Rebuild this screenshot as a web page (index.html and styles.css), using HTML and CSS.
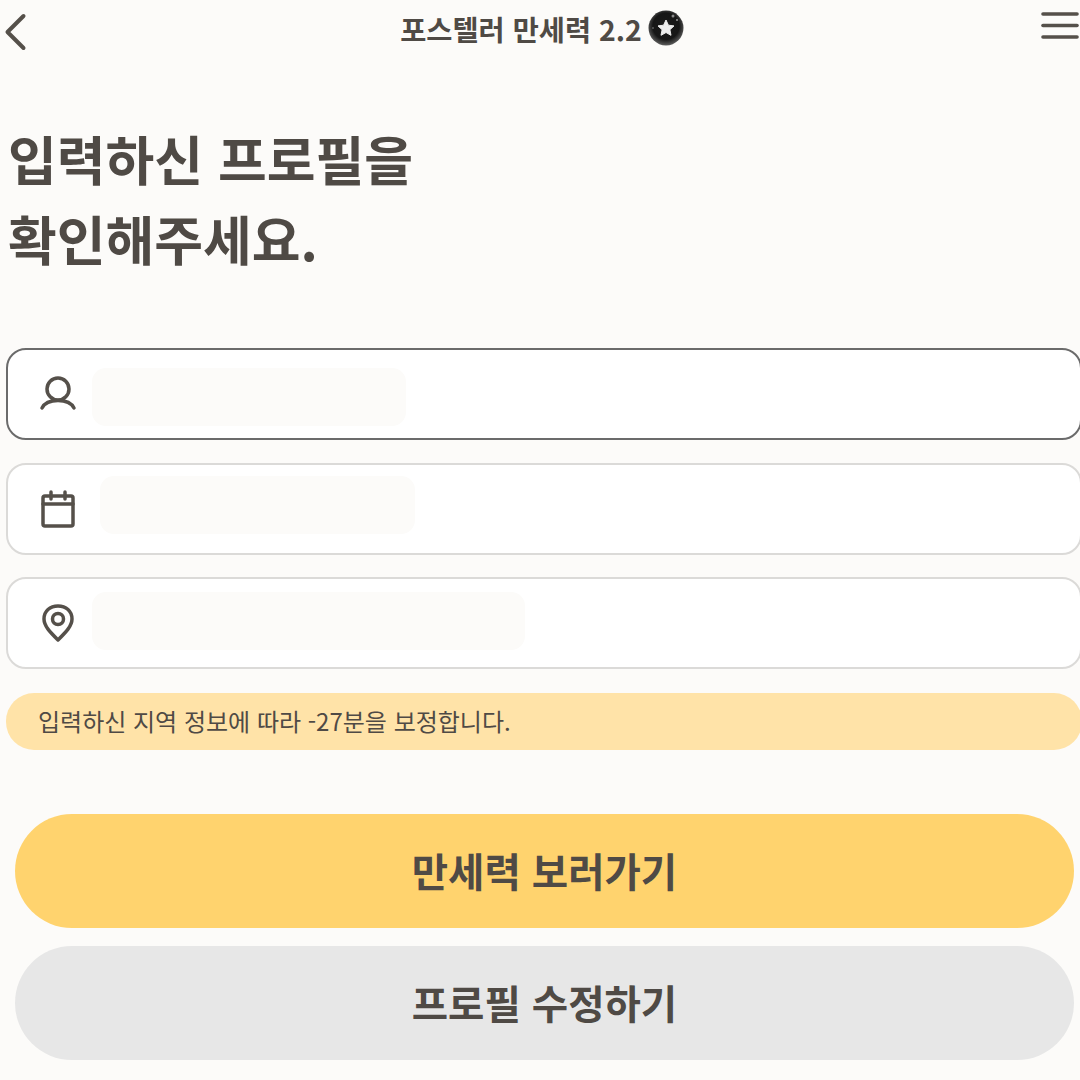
FILE: index.html
```html
<!DOCTYPE html>
<html lang="ko">
<head>
    <meta charset="UTF-8">
    <meta name="viewport" content="width=device-width, initial-scale=1.0">
    <title>프로필 확인</title>
    <link rel="stylesheet" href="styles.css">
</head>
<body>
    <header class="top-bar">
        <svg class="back-icon" width="24" height="38" viewBox="0 0 24 38" fill="none">
            <path d="M20.500 3 L4.500 19 L20.500 35" stroke="#55504a" stroke-width="4" stroke-linecap="round" stroke-linejoin="round"/>
        </svg>
        <div class="top-title">
            <span>포스텔러 만세력 2.2</span>
            <svg width="36" height="36" viewBox="0 0 36 36">
                <defs>
                    <radialGradient id="ball" cx="50%" cy="45%" r="58%">
                        <stop offset="0%" stop-color="#1a1a1a"/>
                        <stop offset="65%" stop-color="#161616"/>
                        <stop offset="100%" stop-color="#6a6a6a"/>
                    </radialGradient>
                </defs>
                <circle cx="18" cy="18" r="17.500" fill="url(#ball)"/>
                <path d="M18 10 L20.400 15.200 L26 15.900 L21.900 19.700 L23 25.300 L18 22.500 L13 25.300 L14.100 19.700 L10 15.900 L15.600 15.200 Z" fill="#ececec" stroke="#ececec" stroke-linejoin="round"/>
                <circle cx="25" cy="6" r="1.500" fill="#8a8a8a"/>
                <circle cx="29" cy="10" r="1" fill="#999"/>
                <circle cx="5" cy="18" r="0.800" fill="#888"/>
            </svg>
        </div>
        <svg class="menu-icon" width="38" height="30" viewBox="0 0 38 30" fill="none" stroke="#55504a" stroke-width="3.600" stroke-linecap="round">
            <path d="M2 3 H36"/>
            <path d="M2 14.500 H36"/>
            <path d="M2 26 H36"/>
        </svg>
    </header>

    <h1 class="headline">입력하신 프로필을<br>확인해주세요.</h1>

    <div class="fields">
        <div class="field field-active">
            <svg class="field-icon" width="38" height="38" viewBox="0 0 38 38" fill="none" stroke="#55504a" stroke-width="3.500" stroke-linecap="round" stroke-linejoin="round">
                <circle cx="19" cy="14" r="11"/>
                <path d="M3 33 C8 23 30 23 35 33"/>
            </svg>
            <div class="masked masked-name"></div>
        </div>
        <div class="field">
            <svg class="field-icon" width="38" height="38" viewBox="0 0 38 38" fill="none" stroke="#55504a" stroke-width="3.500" stroke-linecap="round" stroke-linejoin="round">
                <rect x="4" y="6" width="30" height="30" rx="2"/>
                <path d="M4 14 H34"/>
                <path d="M12 2 V9"/>
                <path d="M26 2 V9"/>
            </svg>
            <div class="masked masked-date"></div>
        </div>
        <div class="field">
            <svg class="field-icon" width="38" height="38" viewBox="0 0 38 38" fill="none" stroke="#55504a" stroke-width="3.500" stroke-linecap="round" stroke-linejoin="round">
                <path d="M19 36 C11 28 5 22 5 15 C5 7 11 2 19 2 C27 2 33 7 33 15 C33 22 27 28 19 36 Z"/>
                <circle cx="19" cy="15" r="5.500"/>
            </svg>
            <div class="masked masked-place"></div>
        </div>
    </div>

    <p class="notice">입력하신 지역 정보에 따라 -27분을 보정합니다.</p>

    <div class="actions">
        <button type="button" class="btn btn-primary">만세력 보러가기</button>
        <button type="button" class="btn btn-secondary">프로필 수정하기</button>
    </div>
</body>
</html>
```

FILE: styles.css
```css
html, body {
    margin: 0;
    padding: 0;
}

body {
    width: 1080px;
    height: 1080px;
    overflow: hidden;
    background-color: #fcfbf9;
    color: #4f4a45;
    font-family: "Noto Sans CJK KR", "Noto Sans", sans-serif;
}

.top-bar {
    display: flex;
    justify-content: space-between;
    align-items: flex-start;
    height: 60px;
    padding: 0 1px 0 3px;
}

.back-icon {
    margin-top: 13px;
}

.menu-icon {
    margin-top: 11px;
}

.top-title {
    display: flex;
    align-items: center;
    gap: 6px;
    height: 56px;
    font-size: 28.400px;
    font-weight: 700;
    margin-left: 16px;
}

.headline {
    margin: 58px 0 0 8px;
    font-size: 53px;
    font-weight: 700;
    line-height: 80px;
}

.fields {
    display: flex;
    flex-direction: column;
    gap: 22.500px;
    margin: 70px 0 0 6px;
    width: 1076px;
}

.field {
    display: flex;
    align-items: center;
    gap: 15px;
    box-sizing: border-box;
    height: 92px;
    padding-left: 31px;
    background-color: #fff;
    border: 2px solid #dbdad8;
    border-radius: 20px;
}

.field-active {
    border-color: #6b6b6b;
}

.field-icon {
    flex-shrink: 0;
}

.masked {
    height: 58px;
    border-radius: 14px;
    background-color: #fcfbf9;
}

.masked-name {
    width: 314px;
    margin-top: 6px;
}

.masked-date {
    width: 315px;
    margin: 0 0 8px 8px;
}

.masked-place {
    width: 433px;
    margin-bottom: 5px;
}

.notice {
    box-sizing: border-box;
    width: 1076px;
    height: 57px;
    margin: 24px 0 0 6px;
    padding: 0 0 2px 32px;
    border-radius: 28px;
    background-color: #ffe3a8;
    font-size: 24px;
    line-height: 55px;
}

.actions {
    display: flex;
    flex-direction: column;
    gap: 18px;
    margin: 64px 0 0 15px;
    width: 1059px;
}

.btn {
    height: 114px;
    padding: 0 0 4px;
    border: none;
    border-radius: 57px;
    color: #4f4a45;
    font-family: inherit;
    font-size: 39.500px;
    font-weight: 700;
}

.btn-primary {
    background-color: #ffd36e;
}

.btn-secondary {
    background-color: #e7e7e7;
}
```
